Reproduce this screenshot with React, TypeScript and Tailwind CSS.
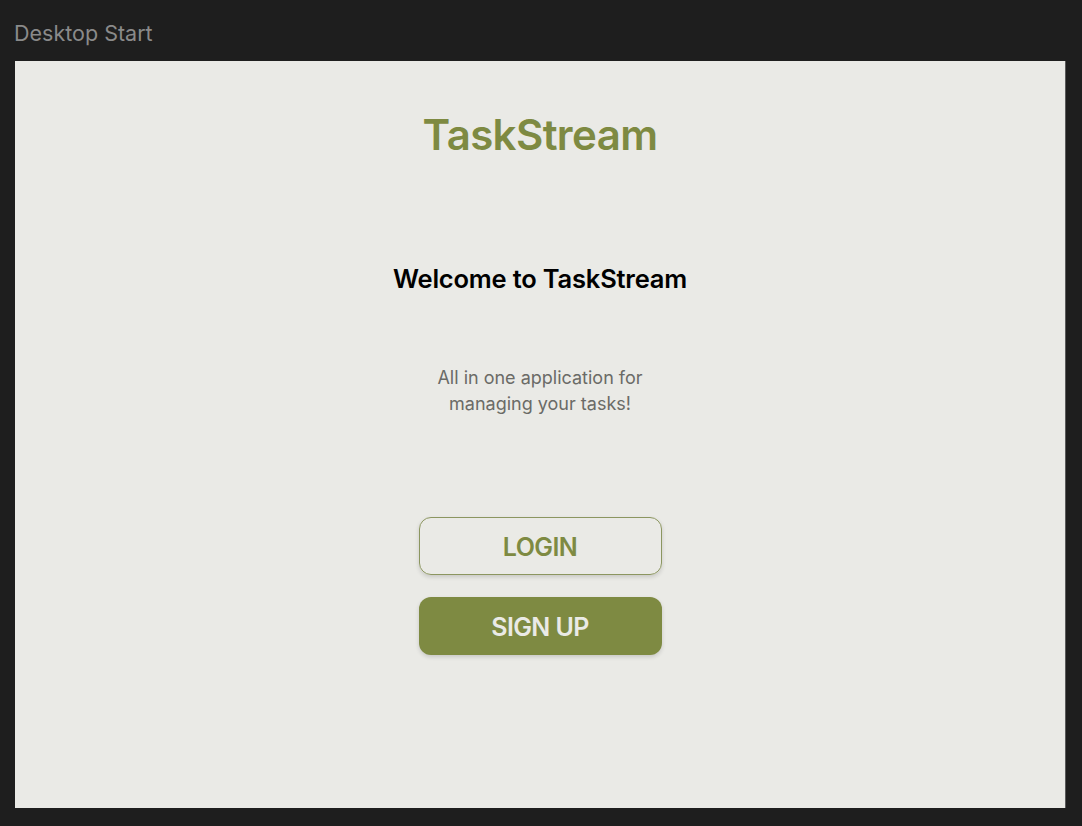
export default function App() {
  return (
    <div className="min-h-[826px] w-[1082px] bg-[#1e1e1e] font-['Inter','Liberation_Sans',sans-serif]">
      <div className="pl-[14px] pt-[18px] h-[61px] text-[21.5px] leading-[30px] text-[#8a8a8a]">
        Desktop Start
      </div>
      <div className="ml-[15px] w-[1051px] h-[747px] bg-[#eaeae6] border-r border-[#5a5a5a] flex flex-col items-center">
        <h1 className="mt-[47px] text-[42px] leading-[54px] font-semibold tracking-[-0.6px] text-[#7e8a42]">
          TaskStream
        </h1>
        <h2 className="mt-[100px] text-[25.5px] leading-[34px] font-semibold text-black tracking-[-0.2px]">
          Welcome to TaskStream
        </h2>
        <p className="mt-[69px] w-[260px] text-center text-[18px] leading-[26px] text-[#6b6b67]">
          All in one application for managing your tasks!
        </p>
        <div className="mt-[100px] flex flex-col gap-[22px]">
          <button className="w-[243px] h-[58px] pt-[3px] rounded-[12px] border border-[#8c9660] text-[#7e8a42] text-[25px] font-semibold tracking-[-0.6px] shadow-[0_2px_4px_rgba(0,0,0,0.15)]">
            LOGIN
          </button>
          <button className="w-[243px] h-[58px] pt-[3px] rounded-[12px] bg-[#7e8a42] text-[#eaeae6] text-[25px] font-semibold tracking-[-0.6px] shadow-[0_2px_4px_rgba(0,0,0,0.15)]">
            SIGN UP
          </button>
        </div>
      </div>
    </div>
  );
}
